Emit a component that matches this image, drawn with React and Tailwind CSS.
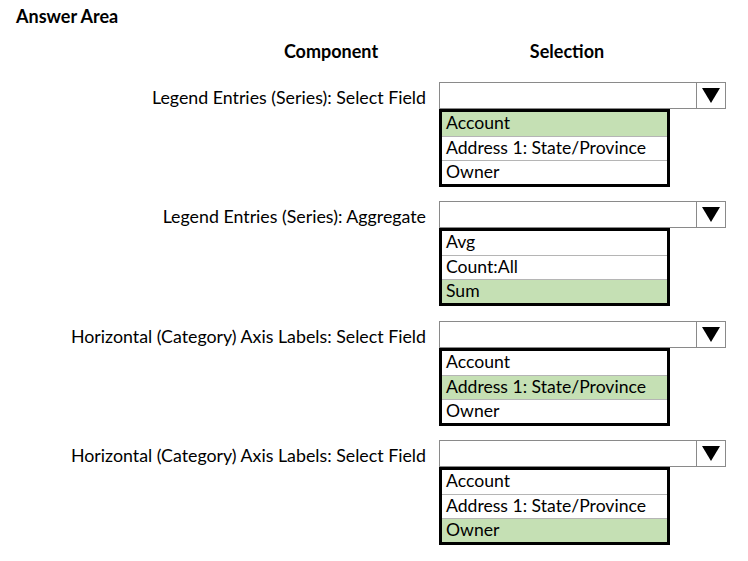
const rows = [
  { label: "Legend Entries (Series): Select Field", options: ["Account", "Address 1: State/Province", "Owner"], pick: 0, x: "ml-0" },
  { label: "Legend Entries (Series): Aggregate", options: ["Avg", "Count:All", "Sum"], pick: 2, x: "ml-0" },
  { label: "Horizontal (Category) Axis Labels: Select Field", options: ["Account", "Address 1: State/Province", "Owner"], pick: 1, x: "ml-[1px]" },
  { label: "Horizontal (Category) Axis Labels: Select Field", options: ["Account", "Address 1: State/Province", "Owner"], pick: 2, x: "ml-[2px]" },
];

function Dropdown({ options, pick }) {
  return (
    <div>
      <div className="flex w-[287px] h-[27px] border border-[#8a8a8a] bg-white">
        <div className="flex-1" />
        <div className="w-[29px] border-l border-[#8a8a8a] flex items-center justify-center">
          <svg width="18" height="15" viewBox="0 0 18 15">
            <path d="M0 0 H18 L9 15 Z" fill="#000" />
          </svg>
        </div>
      </div>
      <div className="w-[231px] border-[3px] border-black bg-white">
        {options.map((o, i) => (
          <div
            key={o}
            className={`h-[24px] leading-[22px] pl-[4px] text-[17.6px] ${
              i > 0 ? "border-t border-[#b5b5b5]" : ""
            } ${i === pick ? "bg-[#c5e0b4]" : ""}`}
          >
            {o}
          </div>
        ))}
      </div>
    </div>
  );
}

export default function App() {
  return (
    <div className="w-[748px] h-[561px] bg-white text-black font-['Lato','Liberation_Sans',sans-serif] overflow-hidden">
      <div className="pt-[5px] pl-[16px] text-[18px] leading-[22px] font-bold">Answer Area</div>
      <div className="flex mt-[13px] text-[18px] leading-[22px] font-bold">
        <div className="ml-[231px] w-[200px] text-center">Component</div>
        <div className="ml-[36px] w-[200px] text-center">Selection</div>
      </div>
      <div className="flex flex-col gap-[14.3px] mt-[20px]">
        {rows.map((r, i) => (
          <div key={i} className="flex">
            <div className="w-[427px] pr-[1px] text-right text-[17.8px] leading-[31px]">
              {r.label}
            </div>
            <div className={`ml-[12px] ${r.x}`}>
              <Dropdown options={r.options} pick={r.pick} />
            </div>
          </div>
        ))}
      </div>
    </div>
  );
}
